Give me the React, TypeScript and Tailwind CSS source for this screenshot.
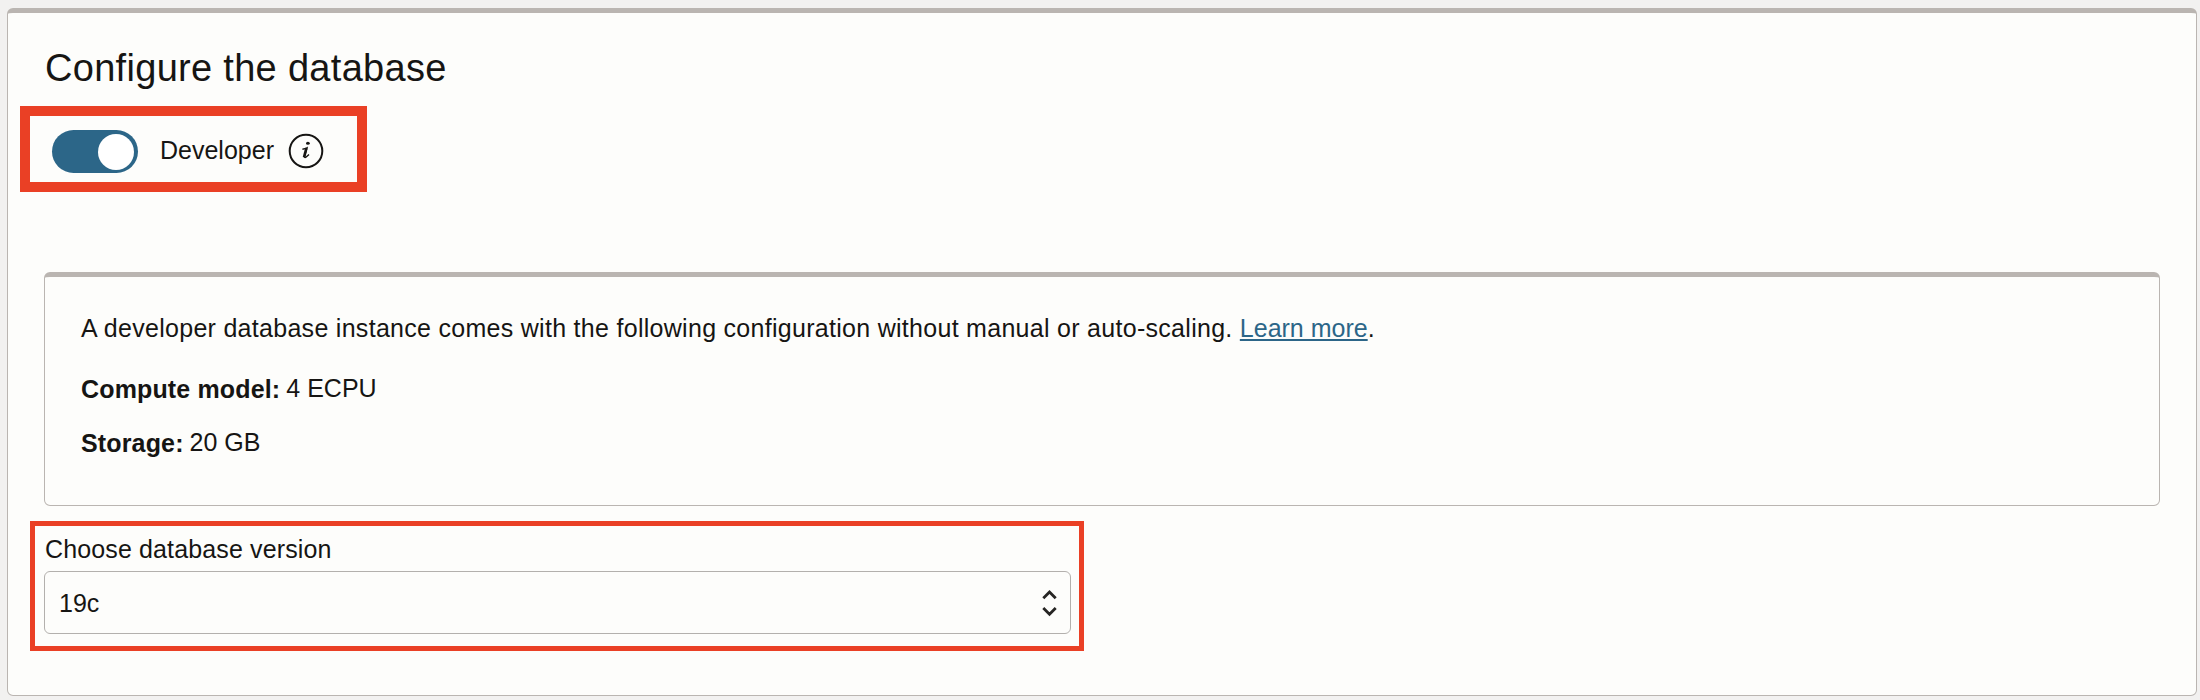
import type { ReactNode } from "react";

function ConfigRow({ label, children }: { label: string; children: ReactNode }) {
  return (
    <p className="flex h-[30px] gap-[6px] whitespace-nowrap">
      <strong className="pt-px font-bold tracking-[0.15px]">{label}</strong>
      <span>{children}</span>
    </p>
  );
}

function InfoIcon() {
  return (
    <svg className="ml-[14px] mt-[3px] size-[36px]" viewBox="0 0 36 36" fill="none">
      <circle cx="18" cy="18" r="16.3" stroke="#161513" strokeWidth="2" />
      <ellipse cx="19.9" cy="10.3" rx="1.9" ry="1.5" fill="#161513" />
      <path
        d="M14.4 16.2 C16.4 15.9 18 15.4 19 14.9 L16.6 23.2 C16.3 24.6 17 24.9 18.2 24 L21 21.4"
        stroke="#161513"
        strokeWidth="1.4"
      />
      <path d="M18.4 15.2 L16 24.4" stroke="#161513" strokeWidth="2.6" />
    </svg>
  );
}

export default function App() {
  return (
    <main className="h-[700px] w-[2200px] overflow-hidden bg-[#f2f1f0] pl-[7px] pt-2 font-['Liberation_Sans',sans-serif] text-[25px] leading-[30px] text-[#161513]">
      <section className="h-[688px] w-[2190px] rounded-[6px] border border-t-[5px] border-[#bab5b1] bg-[#fdfdfb]">
        <h1 className="ml-[37px] mt-[31px] whitespace-nowrap text-[38px] leading-[48px] tracking-[0.3px]">
          Configure the database
        </h1>

        <div className="ml-[12px] mt-[14px] flex h-[86px] w-[347px] border-[10px] border-[#ea4025] pl-[22px] pt-[14px]">
          <button
            role="switch"
            aria-checked="true"
            aria-label="Developer"
            className="flex h-[43px] w-[86px] items-center justify-end rounded-full bg-[#2c6688] pr-[4px]"
          >
            <span className="size-[36px] rounded-full bg-white" />
          </button>
          <span className="ml-[22px] mt-[5px]">Developer</span>
          <InfoIcon />
        </div>

        <div className="ml-[36px] mt-[80px] flex h-[234px] w-[2116px] flex-col rounded-[6px] border border-t-[5px] border-[#bab5b1] pl-[36px] pt-[36px]">
          <p className="mb-[30px] whitespace-nowrap">
            <span className="tracking-[0.287px]">
              A developer database instance comes with the following configuration without manual or auto-scaling.{" "}
            </span>
            <a className="text-[#2c6688] underline decoration-2 underline-offset-2" href="#">Learn more</a>.
          </p>
          <div className="flex flex-col gap-[24px]">
            <ConfigRow label="Compute model:">4 ECPU</ConfigRow>
            <ConfigRow label="Storage:">20 GB</ConfigRow>
          </div>
        </div>

        <div className="ml-[22px] mt-[15px] h-[130px] w-[1054px] border-[5px] border-[#ea4025] pl-[9px] pt-[8px]">
          <label className="block h-[30px] pl-px tracking-[0.13px]">Choose database version</label>
          <div className="mt-[7px] flex h-[63px] w-[1027px] items-center justify-between rounded-[6px] border border-[#b3b0ad] pl-[14px] pr-[12px]">
            <span>19c</span>
            <svg className="h-[28px] w-[17px]" viewBox="0 0 17 28" fill="none" stroke="#262523" strokeWidth="2.8">
              <path d="M2.3 9.2 L8.5 3 L14.7 9.2" />
              <path d="M2.3 19 L8.5 25.2 L14.7 19" />
            </svg>
          </div>
        </div>
      </section>
    </main>
  );
}
